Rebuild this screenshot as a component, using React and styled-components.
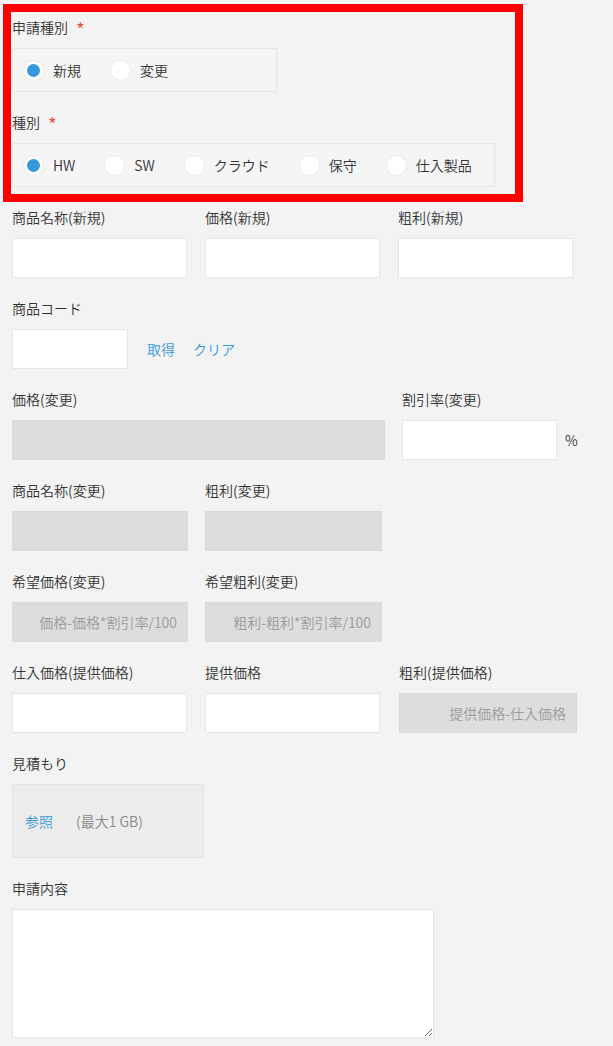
import React from 'react';
import styled, { createGlobalStyle } from 'styled-components';

const Global = createGlobalStyle`
  html, body {
    margin: 0;
    padding: 0;
    background: #f3f3f3;
  }
  body {
    font-family: "Noto Sans CJK JP", "Noto Sans", sans-serif;
    font-size: 14px;
    font-weight: 350;
    color: #333;
  }
`;

const Page = styled.div`
  position: relative;
  box-sizing: border-box;
  min-height: 1046px;
  padding: 17px 0 0 12px;
  display: flex;
  flex-direction: column;
  gap: 20px;
`;

const Highlight = styled.div`
  position: absolute;
  left: 3px;
  top: 4px;
  width: 520px;
  height: 198px;
  box-sizing: border-box;
  border: 8px solid #ff0000;
  pointer-events: none;
`;

const Row = styled.div`
  display: flex;
  gap: ${p => p.$gap || 18}px;
`;

const Field = styled.div`
  display: flex;
  flex-direction: column;
  width: ${p => (p.$w ? `${p.$w}px` : 'auto')};
`;

const Label = styled.div`
  height: 20px;
  line-height: 20px;
  margin-bottom: 11px;
  display: flex;
  align-items: center;
  gap: 8px;
  white-space: nowrap;
`;

const Required = styled.span`
  color: #e74c3c;
  font-size: 19px;
  line-height: 20px;
  padding-top: 4px;
`;

const RadioGroup = styled.div`
  box-sizing: border-box;
  width: ${p => p.$w}px;
  height: 44px;
  border: 1px solid #e3e5e6;
  background: #f5f5f5;
  padding: 0 0 0 11px;
  display: flex;
  align-items: center;
  gap: 30px;
`;

const RadioItem = styled.label`
  display: flex;
  align-items: center;
  gap: 10px;
  white-space: nowrap;
`;

const Circle = styled.span`
  box-sizing: border-box;
  width: 19px;
  height: 19px;
  border-radius: 50%;
  background: #fff;
  box-shadow: 0 0 0 1px #ebebeb;
  display: flex;
  align-items: center;
  justify-content: center;

  &::after {
    content: '';
    width: 13px;
    height: 13px;
    border-radius: 50%;
    background: ${p => (p.$on ? '#3498db' : 'transparent')};
  }
`;

const Input = styled.div`
  box-sizing: border-box;
  width: ${p => p.$w}px;
  height: ${p => p.$h || 40}px;
  background: #fff;
  border: 1px solid #e3e7e8;
`;

const Disabled = styled.div`
  box-sizing: border-box;
  width: ${p => p.$w}px;
  height: 40px;
  background: #dcdddd;
  border: 1px solid #d8d9d9;
  display: flex;
  align-items: center;
  justify-content: flex-end;
  padding-right: 10px;
  color: #9b9b9b;
  white-space: nowrap;
`;

const Inline = styled.div`
  display: flex;
  align-items: center;
  gap: ${p => p.$gap || 8}px;
`;

const Link = styled.span`
  color: #3498db;
  cursor: pointer;
`;

const Unit = styled.span`
  color: #333;
`;

const FileBox = styled.div`
  box-sizing: border-box;
  width: 192px;
  height: 74px;
  background: #ececec;
  border: 1px solid #e0e2e3;
  display: flex;
  align-items: center;
  gap: 23px;
  padding-left: 12px;
`;

const Note = styled.span`
  color: #888;
`;

const TextArea = styled.textarea`
  box-sizing: border-box;
  width: 422px;
  height: 129px;
  margin: 0;
  background: #fff;
  border: 1px solid #e3e7e8;
  resize: both;
  font: inherit;
`;

function Radio({ label, checked }) {
  return (
    <RadioItem>
      <Circle $on={checked} />
      {label}
    </RadioItem>
  );
}

export default function App() {
  return (
    <>
      <Global />
      <Page>
        <Field>
          <Label>申請種別<Required>*</Required></Label>
          <RadioGroup $w={265}>
            <Radio label="新規" checked />
            <Radio label="変更" />
          </RadioGroup>
        </Field>

        <Field>
          <Label>種別<Required>*</Required></Label>
          <RadioGroup $w={483}>
            <Radio label="HW" checked />
            <Radio label="SW" />
            <Radio label="クラウド" />
            <Radio label="保守" />
            <Radio label="仕入製品" />
          </RadioGroup>
        </Field>

        <Row>
          <Field $w={175}>
            <Label>商品名称(新規)</Label>
            <Input $w={175} />
          </Field>
          <Field $w={175}>
            <Label>価格(新規)</Label>
            <Input $w={175} />
          </Field>
          <Field $w={175}>
            <Label>粗利(新規)</Label>
            <Input $w={175} />
          </Field>
        </Row>

        <Field>
          <Label>商品コード</Label>
          <Inline $gap={19}>
            <Input $w={116} />
            <Inline $gap={18}>
              <Link>取得</Link>
              <Link>クリア</Link>
            </Inline>
          </Inline>
        </Field>

        <Row $gap={17}>
          <Field $w={373}>
            <Label>価格(変更)</Label>
            <Disabled $w={373} />
          </Field>
          <Field>
            <Label>割引率(変更)</Label>
            <Inline>
              <Input $w={155} />
              <Unit>%</Unit>
            </Inline>
          </Field>
        </Row>

        <Row $gap={17}>
          <Field $w={176}>
            <Label>商品名称(変更)</Label>
            <Disabled $w={176} />
          </Field>
          <Field $w={177}>
            <Label>粗利(変更)</Label>
            <Disabled $w={177} />
          </Field>
        </Row>

        <Row $gap={17}>
          <Field $w={176}>
            <Label>希望価格(変更)</Label>
            <Disabled $w={176}>価格-価格*割引率/100</Disabled>
          </Field>
          <Field $w={177}>
            <Label>希望粗利(変更)</Label>
            <Disabled $w={177}>粗利-粗利*割引率/100</Disabled>
          </Field>
        </Row>

        <Row>
          <Field $w={175}>
            <Label>仕入価格(提供価格)</Label>
            <Input $w={175} />
          </Field>
          <Field $w={176}>
            <Label>提供価格</Label>
            <Input $w={175} />
          </Field>
          <Field $w={178}>
            <Label>粗利(提供価格)</Label>
            <Disabled $w={178}>提供価格-仕入価格</Disabled>
          </Field>
        </Row>

        <Field>
          <Label>見積もり</Label>
          <FileBox>
            <Link>参照</Link>
            <Note>(最大1 GB)</Note>
          </FileBox>
        </Field>

        <Field>
          <Label>申請内容</Label>
          <TextArea />
        </Field>

        <Highlight />
      </Page>
    </>
  );
}
